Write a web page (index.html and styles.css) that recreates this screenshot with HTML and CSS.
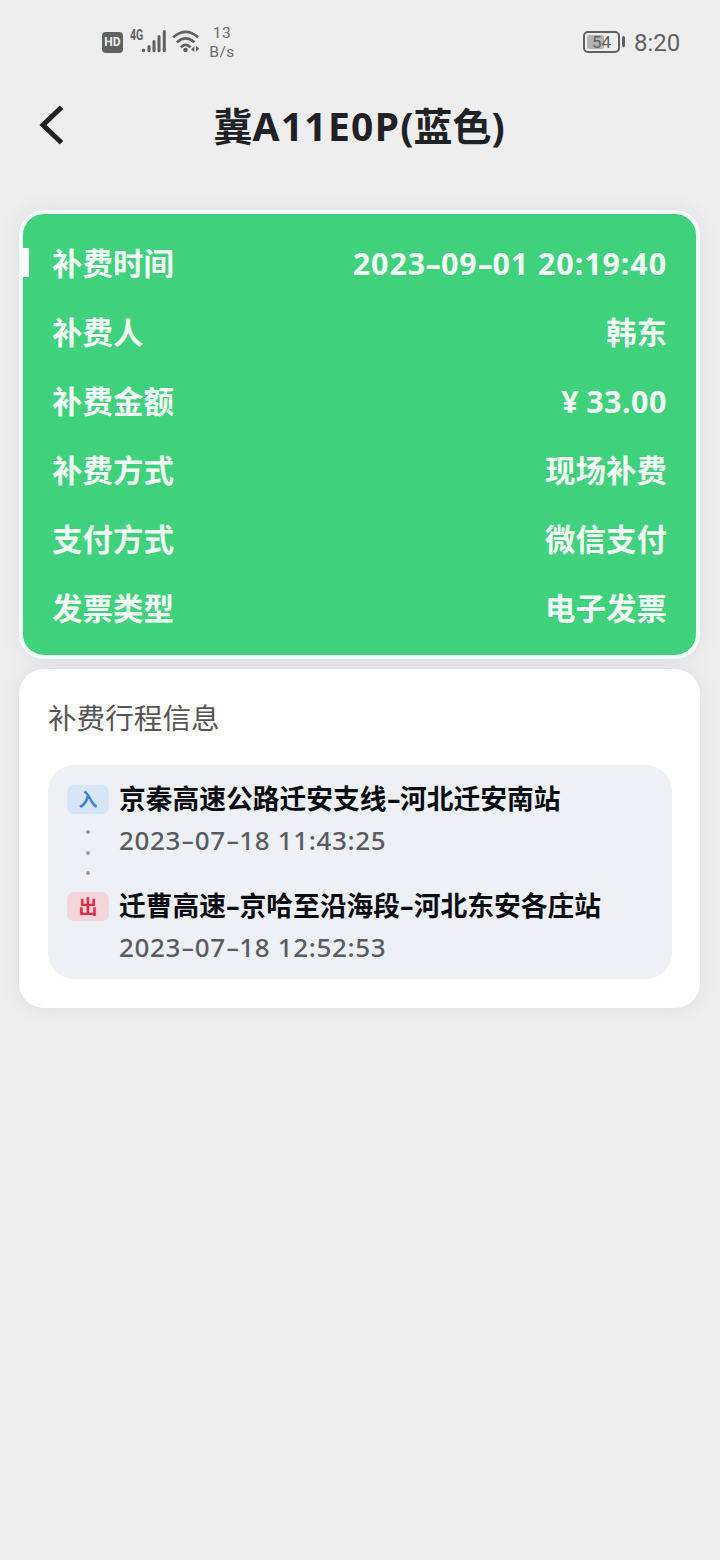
FILE: index.html
```html
<!DOCTYPE html>
<html lang="zh-CN">
<head>
<meta charset="utf-8">
<title>冀A11E0P(蓝色)</title>
<link rel="stylesheet" href="styles.css">
</head>
<body>
<div class="status">
  <div class="status-left">
    <span class="hd">HD</span>
    <span class="net">4G</span>
    <svg class="signal" width="24" height="24" viewBox="0 0 24 24" stroke="#606060" stroke-width="3" stroke-linecap="round">
      <path d="M1.5 21v.8M7 17.5v4.3M12 12.5v9.3M17 7.5v14.3M22.3 2.5v19.3"/>
    </svg>
    <svg class="wifi" width="30" height="24" viewBox="0 0 30 24" fill="none" stroke="#606060" stroke-width="2.7">
      <path d="M1.300 7.200Q13.700-3.300 26.100 7.200M5 12.300Q13.700 4.500 22.400 12.300M8.800 17.200Q13.700 12.600 18.600 17.200"/>
      <circle cx="13.5" cy="20" r="2.300" fill="#606060" stroke="none"/>
      <path d="M22.300 16.500v5.500l-3.300-2.700zM24 16v5.500l3.300-2.700z" fill="#606060" stroke="none"/>
    </svg>
    <div class="speed"><span>13</span><span>B/s</span></div>
  </div>
  <div class="status-right">
    <span class="battery"><span class="level"></span><span class="percent">54</span></span>
    <span class="battery-tip"></span>
    <span class="clock">8:20</span>
  </div>
</div>

<header class="nav">
  <svg class="back" width="26" height="40" viewBox="0 0 26 40" fill="none" stroke="#202124" stroke-width="5">
    <path d="M23.500 2.200 5 20l18.500 17.800"/>
  </svg>
  <h1 class="title">冀<span class="plate">A11E0P</span>(蓝色)</h1>
</header>

<main class="content">
  <section class="payment">
    <div class="row marked"><span>补费时间</span><span class="paid-at">2023<span class="dash">-</span>09<span class="dash">-</span>01 20:19:40</span></div>
    <div class="row"><span>补费人</span><span>韩东</span></div>
    <div class="row"><span>补费金额</span><span class="amount"><span class="yen">¥</span>33.00</span></div>
    <div class="row"><span>补费方式</span><span>现场补费</span></div>
    <div class="row"><span>支付方式</span><span>微信支付</span></div>
    <div class="row"><span>发票类型</span><span>电子发票</span></div>
  </section>

  <section class="trip">
    <h2 class="trip-title">补费行程信息</h2>
    <div class="route">
      <div class="rail">
        <span class="tag tag-in">入</span>
        <div class="dots"><i></i><i></i><i></i></div>
        <span class="tag tag-out">出</span>
      </div>
      <div class="stops">
        <div class="stop">
          <div class="station">京秦高速公路迁安支线<span class="dash">-</span>河北迁安南站</div>
          <div class="time">2023<span class="dash">-</span>07<span class="dash">-</span>18 11:43:25</div>
        </div>
        <div class="stop">
          <div class="station">迁曹高速<span class="dash">-</span>京哈至沿海段<span class="dash">-</span>河北东安各庄站</div>
          <div class="time">2023<span class="dash">-</span>07<span class="dash">-</span>18 12:52:53</div>
        </div>
      </div>
    </div>
  </section>
</main>
</body>
</html>
```

FILE: styles.css
```css
* { box-sizing: border-box; }

body {
  margin: 0;
  min-height: 1560px;
  background: #eeeeee;
  font-family: "Noto Sans", "Noto Sans CJK SC", sans-serif;
  color: #202124;
}

.status {
  display: flex;
  justify-content: space-between;
  height: 84px;
  padding: 0 40px 0 102px;
  color: #606060;
}
.status-left { display: flex; align-items: flex-start; padding-top: 24px; }
.hd {
  width: 21px;
  height: 21px;
  margin-top: 8px;
  border-radius: 4px;
  background: #606060;
  color: #eeeeee;
  font: bold 12px/21px Roboto, sans-serif;
  text-align: center;
}
.net {
  width: 13px;
  margin: 4px 0 0 7px;
  font: bold 14px/15px Roboto, sans-serif;
  transform: scaleX(0.76);
  transform-origin: left;
}
.signal { margin: 5px 0 0 -1px; }
.wifi { margin: 6px 0 0 6px; }
.speed {
  display: flex;
  flex-direction: column;
  align-items: center;
  width: 28px;
  margin-left: 6px;
  font: 15.500px/19px Roboto, sans-serif;
  letter-spacing: 0.5px;
  color: #6c6c6c;
}
.status-right { display: flex; align-items: flex-start; padding-top: 31px; }
.battery {
  position: relative;
  display: grid;
  place-items: center;
  width: 37px;
  height: 22px;
  border: 2px solid #606060;
  border-radius: 5px;
}
.level { position: absolute; left: 2px; top: 2px; width: 17px; height: 14px; border-radius: 2px; background: #b4b4b4; }
.percent { position: relative; font: 17px/18px Roboto, sans-serif; }
.battery-tip { width: 3px; height: 11px; margin: 5px 9px 0 2px; border-radius: 2px; background: #606060; }
.clock { width: 46px; font: 24px/25px Roboto, sans-serif; white-space: nowrap; }

.nav { display: grid; grid-template-columns: 60px 1fr 60px; align-items: center; height: 84px; }
.back { justify-self: end; margin: -2px -4px 0 0; }
.title { margin: 0 2px 0 0; font-size: 39px; line-height: 56px; font-weight: 700; text-align: center; white-space: nowrap; }
.plate { letter-spacing: 1.300px; }

.content { display: flex; flex-direction: column; gap: 10px; padding: 42px 20px 0 19px; }
.payment {
  height: 449px;
  padding: 16px 29px 0 29px;
  border: 4px solid #f4fffa;
  border-radius: 25px;
  background: #40d17c;
  box-shadow: 0 0 20px rgba(90, 100, 150, 0.1);
}
.row {
  position: relative;
  display: flex;
  justify-content: space-between;
  height: 69px;
  color: #f2fff7;
  font-size: 30.500px;
  font-weight: 700;
  line-height: 67px;
  white-space: nowrap;
}
.marked::before { content: ""; position: absolute; left: -30px; top: 18px; width: 7px; height: 29px; background: #ffffff; }
.paid-at { letter-spacing: 0.900px; }
.paid-at .dash { width: 14.800px; }
.amount { letter-spacing: 0.500px; }
.yen { margin-right: 7px; }

.dash {
  display: inline-block;
  width: 13.600px;
  letter-spacing: 0;
  text-align: center;
  transform: scaleX(1.600);
}

.trip {
  height: 339px;
  padding: 28px 28px 0 29px;
  border-radius: 25px;
  background: #ffffff;
  box-shadow: 0 0 20px rgba(90, 100, 150, 0.1);
}
.trip-title { margin: 0; height: 68px; color: #555555; font-size: 28.600px; font-weight: 400; line-height: 42px; }
.route { display: flex; gap: 10px; height: 214px; padding: 14px 19px; border-radius: 26px; background: #edf0f4; }
.rail { display: flex; flex-direction: column; width: 42px; padding-top: 6px; }
.tag { height: 29px; border-radius: 7px; font-size: 19px; font-weight: 700; line-height: 30px; text-align: center; }
.tag-in { background: #d6e6f8; color: #3f7fd0; }
.tag-out { background: #f4d5dc; color: #d82f49; }
.dots { display: flex; flex-direction: column; align-items: center; gap: 16.500px; height: 78px; padding-top: 16px; }
.dots i { flex: none; width: 4px; height: 4px; border-radius: 50%; background: #999da2; }
.stop { height: 107px; }
.station { color: #090b10; font-size: 26.750px; font-weight: 700; line-height: 40px; white-space: nowrap; }
.time { color: #5a5b62; font-size: 26px; font-weight: 500; line-height: 43px; letter-spacing: 0.650px; white-space: nowrap; }
```
